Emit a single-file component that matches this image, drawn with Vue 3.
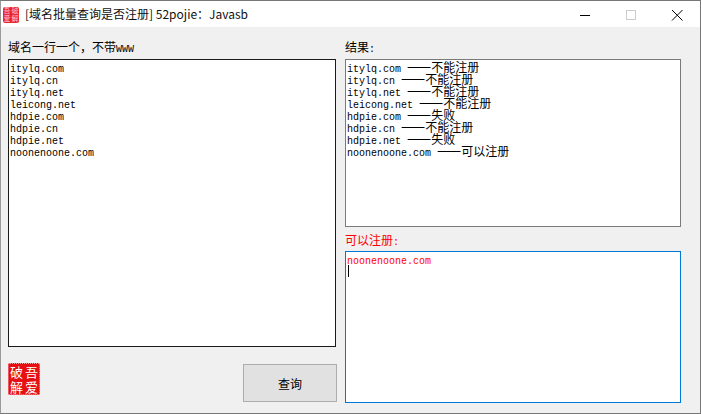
<script setup>
const domains = ['itylq.com','itylq.cn','itylq.net','leicong.net','hdpie.com','hdpie.cn','hdpie.net','noonenoone.com']
const results = [
  ['itylq.com','不能注册'],['itylq.cn','不能注册'],['itylq.net','不能注册'],['leicong.net','不能注册'],
  ['hdpie.com','失败'],['hdpie.cn','不能注册'],['hdpie.net','失败'],['noonenoone.com','可以注册']
]
const titleText = '[域名批量查询是否注册] 52pojie\uFF1AJavasb'
const leftLabel = '域名一行一个\uFF0C不带'
</script>

<template>
  <div class="window">
    <header class="titlebar">
      <div class="seal seal-small"><span>吾</span><span>破</span><span>爱</span><span>解</span></div>
      <div class="title">{{ titleText }}</div>
      <div class="controls">
        <svg width="46" height="27" viewBox="0 0 46 27"><path d="M18 14.500h10" stroke="#000" fill="none"/></svg>
        <svg width="46" height="27" viewBox="0 0 46 27"><rect x="18.500" y="9.500" width="9" height="9" stroke="#ccc" fill="none"/></svg>
        <svg width="46" height="27" viewBox="0 0 46 27"><path d="M18 9l10.500 10.500M28.500 9L18 19.500" stroke="#000" fill="none"/></svg>
      </div>
    </header>
    <main class="content">
      <section class="col left">
        <div class="label">{{ leftLabel }}<span class="latin">WWW</span></div>
        <div class="box dark">
          <div v-for="d in domains" :key="d" class="line"><span class="latin">{{ d }}</span></div>
        </div>
        <div class="footer">
          <div class="seal seal-big"><span>破</span><span>吾</span><span>解</span><span>爱</span></div>
          <button class="query">查询</button>
        </div>
      </section>
      <section class="col right">
        <div class="label">结果<span class="latin">:</span></div>
        <div class="box gray">
          <div v-for="r in results" :key="r[0]" class="line"><span class="latin">{{ r[0] + ' ' }}</span><span class="dash">——</span><span>{{ r[1] }}</span></div>
        </div>
        <div class="label red second">可以注册<span class="latin">:</span></div>
        <div class="box blue">
          <div class="line red"><span class="latin">noonenoone.com</span></div>
          <div class="caret"></div>
        </div>
      </section>
    </main>
  </div>
</template>

<style>
html, body { margin: 0; background: #f0f0f0; }
</style>

<style scoped>
.window {
  width: 701px; height: 414px; box-sizing: border-box;
  border: 1px solid #777; border-left-color: #999;
  background: #f0f0f0; display: flex; flex-direction: column;
  font-family: "Noto Sans CJK SC", "Liberation Sans", sans-serif; font-size: 12px; color: #000;
  overflow: hidden;
}
.titlebar { height: 26px; background: #fff; display: flex; align-items: center; padding-left: 2px; flex: none; }
.title { margin-left: 6px; font-size: 12px; color: #111; line-height: 26px; white-space: nowrap; }
.controls { margin-left: auto; display: flex; }
.controls svg { display: block; }
.content { flex: 1; display: flex; gap: 8px; padding: 12px 19px 10px 7px; min-height: 0; }
.col { display: flex; flex-direction: column; }
.left { width: 329px; }
.right { width: 336px; }
.label { height: 20px; line-height: 16px; flex: none; font-size: 12px; }
.second { height: 19px; margin-top: 5px; }
.box { box-sizing: border-box; background: #fff; padding: 1px; overflow: hidden; }
.left .box { width: 328px; height: 288px; }
.dark { border: 1px solid #1a1a1a; }
.gray { border: 1px solid #7a7a7a; height: 168px; flex: none; }
.blue { border: 1px solid #0078d7; height: 152px; flex: none; }
.line { height: 12px; line-height: 12px; white-space: pre; font-size: 12px; }
.latin { font-family: "Liberation Mono", monospace; font-size: 10px; }
.dash { font-size: 14.4px; line-height: 0; }
.red { color: #f00; }
.caret { width: 1px; height: 12px; background: #000; margin-left: 1px; }
.footer { display: flex; justify-content: space-between; align-items: flex-start; margin-top: 16px; }
.seal {
  display: grid; grid-template-columns: 1fr 1fr; grid-template-rows: 1fr 1fr;
  background: #e60f12; color: #fff; border-radius: 2px; place-items: center;
}
.seal span { line-height: 1; display: block; }
.seal-big { width: 32px; height: 32px; font-size: 13px; outline: 1px dotted #f4a0a0; outline-offset: -1px; padding: 1px; box-sizing: border-box; }
.seal-small { width: 16px; height: 16px; font-size: 7px; background: #e9252a; color: #fbd; flex: none; margin-top: 1px; }
.query {
  width: 94px; height: 38px; box-sizing: border-box; margin: 1px 0 0; padding: 0;
  background: #e1e1e1; border: 1px solid #adadad; font: inherit; font-size: 12px; color: #000;
}
</style>
